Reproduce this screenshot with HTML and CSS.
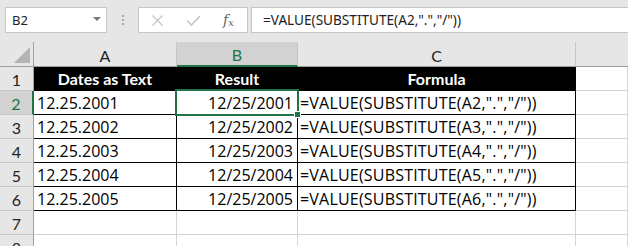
FILE: index.html
```html
<!DOCTYPE html>
<html>
<head>
<meta charset="utf-8">
<link rel="stylesheet" href="styles.css">
</head>
<body>
<div class="app">
  <div class="toolbar">
    <div class="namebox"><span class="nb-text">B2</span><span class="caret"></span></div>
    <div class="grip"><i></i><i></i><i></i></div>
    <div class="fxbox">
      <svg class="ico-x" width="11" height="11" viewBox="0 0 11 11"><path d="M0.5 0.5 L10.5 10.5 M10.5 0.5 L0.5 10.5" stroke="#c4c4c4" stroke-width="1.3" fill="none"/></svg>
      <svg class="ico-ok" width="15" height="11" viewBox="0 0 15 11"><path d="M1 5.5 L5.5 10 L14 1" stroke="#c4c4c4" stroke-width="1.6" fill="none"/></svg>
      <span class="fx">f<sub>x</sub></span>
    </div>
    <div class="formula">=VALUE(SUBSTITUTE(A2,".","/"))</div>
  </div>
  <div class="sheet">
    <div class="ch corner"><span class="tri"></span></div>
    <div class="ch">A</div>
    <div class="ch sel">B</div>
    <div class="ch">C</div>
    <div class="ch last"></div>

    <div class="rh">1</div>
    <div class="c t hd">Dates as Text</div>
    <div class="c t hd">Result</div>
    <div class="c t hd">Formula</div>
    <div class="c"></div>

    <div class="rh sel">2</div>
    <div class="c t">12.25.2001</div>
    <div class="c t r">12/25/2001</div>
    <div class="c t f">=VALUE(SUBSTITUTE(A2,".","/"))</div>
    <div class="c"></div>

    <div class="rh">3</div>
    <div class="c t">12.25.2002</div>
    <div class="c t r">12/25/2002</div>
    <div class="c t f">=VALUE(SUBSTITUTE(A3,".","/"))</div>
    <div class="c"></div>

    <div class="rh">4</div>
    <div class="c t">12.25.2003</div>
    <div class="c t r">12/25/2003</div>
    <div class="c t f">=VALUE(SUBSTITUTE(A4,".","/"))</div>
    <div class="c"></div>

    <div class="rh">5</div>
    <div class="c t">12.25.2004</div>
    <div class="c t r">12/25/2004</div>
    <div class="c t f">=VALUE(SUBSTITUTE(A5,".","/"))</div>
    <div class="c"></div>

    <div class="rh">6</div>
    <div class="c t">12.25.2005</div>
    <div class="c t r">12/25/2005</div>
    <div class="c t f">=VALUE(SUBSTITUTE(A6,".","/"))</div>
    <div class="c"></div>

    <div class="rh">7</div>
    <div class="c"></div>
    <div class="c"></div>
    <div class="c"></div>
    <div class="c"></div>

    <div class="rh">8</div>
    <div class="c"></div>
    <div class="c"></div>
    <div class="c"></div>
    <div class="c"></div>

    <div class="selection"></div>
    <div class="handle"></div>
  </div>
</div>
</body>
</html>
```

FILE: styles.css
```css
* { box-sizing: border-box; }
html, body { margin: 0; padding: 0; }
body { width: 628px; height: 246px; overflow: hidden; background: #fff; }

.app { width: 628px; height: 246px; overflow: hidden; }

.toolbar {
  height: 42px;
  background: #e6e6e6;
  display: flex;
  align-items: flex-start;
  padding: 7px 0 0 5px;
  font-family: "Noto Sans", "Open Sans", sans-serif;
  font-size: 13px;
  color: #222;
}
.namebox {
  width: 102px;
  height: 26px;
  background: #fff;
  border: 1px solid #c6c6c6;
  display: flex;
  align-items: center;
  justify-content: space-between;
  padding: 0 5px 0 6px;
}
.nb-text { line-height: 24px; }
.caret {
  width: 0; height: 0;
  border-left: 4px solid transparent;
  border-right: 4px solid transparent;
  border-top: 4px solid #777;
  margin-top: -2px;
}
.grip {
  width: 31px;
  height: 26px;
  display: flex;
  flex-direction: column;
  align-items: center;
  justify-content: center;
  gap: 2px;
}
.grip i { display: block; width: 2px; height: 2px; background: #a8a8a8; }
.fxbox {
  width: 110px;
  height: 26px;
  background: #fff;
  border: 1px solid #c6c6c6;
  display: flex;
  align-items: center;
  padding-left: 13px;
}
.ico-x { margin-right: 23px; }
.ico-ok { margin-right: 22px; }
.fx {
  font-family: "DejaVu Serif", "Liberation Serif", serif;
  font-style: italic;
  font-size: 14px;
  color: #666;
  line-height: 1;
}
.fx sub { font-size: 10px; vertical-align: -1px; }
.formula {
  margin-left: 3px;
  flex: 1;
  height: 26px;
  background: #fff;
  border: 1px solid #c6c6c6;
  border-right: none;
  padding-left: 11px;
  line-height: 24px;
  font-size: 13.6px;
  white-space: nowrap;
}

.sheet {
  position: relative;
  display: grid;
  grid-template-columns: 34px 143px 121px 278px 52px;
  grid-template-rows: 25px repeat(8, 24px);
  font-family: "Lato", "Open Sans", sans-serif;
  font-size: 16px;
  color: #000;
}
.ch {
  background: #e6e6e6;
  border-right: 1px solid #c6c6c6;
  border-bottom: 1px solid #9e9e9e;
  display: flex;
  align-items: center;
  justify-content: center;
  padding-top: 2px;
  color: #222;
}
.ch.last { border-right: none; }
.ch.sel { background: #d2d2d2; color: #217346; border-bottom: 2px solid #217346; }
.corner { position: relative; border-right: 1px solid #9e9e9e; }
.tri {
  position: absolute;
  right: 3px; bottom: 3px;
  width: 0; height: 0;
  border-left: 16px solid transparent;
  border-bottom: 16px solid #b4b4b4;
}
.rh {
  background: #e6e6e6;
  border-right: 1px solid #9e9e9e;
  border-bottom: 1px solid #c6c6c6;
  display: flex;
  align-items: center;
  justify-content: center;
  padding-top: 1px;
  color: #222;
}
.rh.sel { background: #d2d2d2; color: #217346; border-right: 2px solid #217346; }
.c {
  border-right: 1px solid #d4d4d4;
  border-bottom: 1px solid #d4d4d4;
  display: flex;
  align-items: center;
  padding: 0 3px 0 3px;
  white-space: nowrap;
  overflow: hidden;
  font-family: "Open Sans", "Lato", sans-serif;
  font-size: 16px;
  line-height: 22px;
}
.c.t { border-right-color: #000; border-bottom-color: #000; }
.c.hd {
  background: #000;
  color: #fff;
  font-family: "Lato", "Open Sans", sans-serif;
  font-weight: bold;
  justify-content: center;
  padding-top: 1px;
}
.c.r { justify-content: flex-end; padding-right: 4px; }
.c.f { padding-left: 2px; letter-spacing: 0.2px; }

.selection {
  position: absolute;
  left: 175px; top: 47px;
  width: 124px; height: 27px;
  border: 2px solid #217346;
  pointer-events: none;
}
.handle {
  position: absolute;
  left: 294px; top: 69px;
  width: 7px; height: 7px;
  background: #217346;
  border: 1px solid #fff;
}
```
